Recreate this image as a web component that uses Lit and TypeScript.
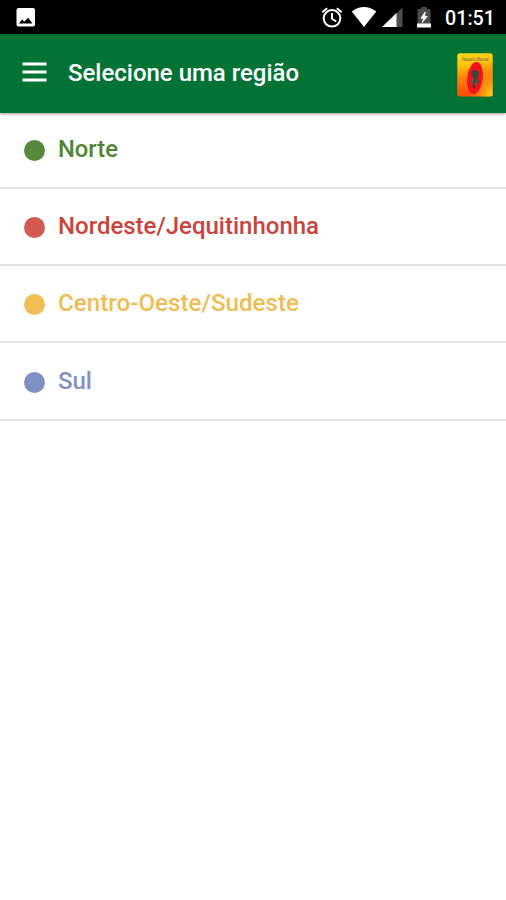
import { LitElement, html, css, svg } from "lit";
import { customElement } from "lit/decorators.js";
import { styleMap } from "lit/directives/style-map.js";

const regions = [
  { name: "Norte", dot: "#56893b", text: "#4c8632", width: 60 },
  { name: "Nordeste/Jequitinhonha", dot: "#d15950", text: "#cb4339", width: 261 },
  { name: "Centro-Oeste/Sudeste", dot: "#f1be55", text: "#efbd54", width: 241 },
  { name: "Sul", dot: "#8090c2", text: "#8391c5", width: 34 },
];

// Text fitted to a fixed advance so the labels keep the device's metrics.
const label = (text: string, width: number) => html`<svg class="label" width=${width} height="30" role="img" aria-label=${text}>
  ${svg`<text x="0" y="23" textLength=${width} lengthAdjust="spacingAndGlyphs">${text}</text>`}
</svg>`;

@customElement("app-root")
export class AppRoot extends LitElement {
  static styles = css`
    :host {
      display: flex;
      flex-direction: column;
      height: 900px;
      background: #fff;
      font-family: Roboto, "Liberation Sans", sans-serif;
      font-size: 24.5px;
      font-weight: 500;
    }
    svg { display: block; flex: none; }
    .label { overflow: visible; }
    .label text { fill: currentColor; }
    .status {
      height: 34px;
      flex: none;
      background: #000;
      color: #fff;
      font-size: 20px;
    }
    .bar {
      height: 78.5px;
      flex: none;
      box-sizing: border-box;
      display: flex;
      align-items: center;
      padding: 0 13px 0 22px;
      background: #027335;
      color: #fff;
      box-shadow: 0 1px 3px rgba(0, 0, 0, 0.4);
      z-index: 1;
    }
    .title { margin: -1px auto 0 21px; }
    .menu { margin-top: -3px; }
    .app-icon { margin-top: 4px; overflow: visible; }
    .list { display: flex; flex-direction: column; }
    .row {
      height: 77.4px;
      box-sizing: border-box;
      display: flex;
      align-items: flex-start;
      padding: 22.5px 0 0 24px;
      border-bottom: 2px solid #e2e2e2;
    }
    .row:first-child { height: 76px; padding-top: 21px; }
    .dot {
      width: 21px;
      height: 21px;
      border-radius: 50%;
      margin: 6px 12.5px 0 0;
      flex: none;
    }
  `;

  render() {
    return html`
      <svg class="status" width="506" height="34" viewBox="0 0 506 34">
        <rect x="16.5" y="8" width="18.5" height="18.5" rx="2" fill="#fff" />
        <path d="M19 23.5L22 19.5L24.3 21.5L28.2 17.7L29.8 20L32.5 23.5Z" fill="#000" />
        <g fill="none" stroke="#fff" stroke-width="2">
          <circle cx="332" cy="18.3" r="8.3" />
          <path d="M332 13V18.8L336.3 21.5" />
          <path d="M322.3 12.3L327.2 8.2M341.7 12.3L336.8 8.2" />
        </g>
        <path d="M364 27L351.8 11.4Q364 2.7 376.3 11.4Z" fill="#fff" />
        <path d="M402.5 7.5V27H396V14Z" fill="#4d4d4d" />
        <path d="M396.5 13V27H382Z" fill="#fff" />
        <path d="M421 9V7H427V9H430.5V24H417.5V9Z" fill="#4b4b4b" />
        <path d="M417 23.5H431V27.5H417Z" fill="#fff" />
        <path d="M425.2 12L420.9 18.2H423.7L422.2 22.5L427.3 16.6H424.7Z" fill="#fff" stroke="#fff" stroke-width=".8" />
        <text x="445" y="25" fill="#fff" textLength="50" lengthAdjust="spacingAndGlyphs">01:51</text>
      </svg>
      <header class="bar">
        <svg class="menu" width="25" height="20" viewBox="0 0 25 20">
          <path d="M.5 2H24.5M.5 10H24.5M.5 18H24.5" stroke="#fff" stroke-width="2.8" />
        </svg>
        <div class="title">${label("Selecione uma região", 231)}</div>
        <svg class="app-icon" width="36" height="44" viewBox="0 0 36 44">
          <defs>
            <linearGradient id="sky" x1="0" y1="0" x2=".15" y2="1">
              <stop offset="0" stop-color="#ffd91e" />
              <stop offset=".3" stop-color="#ffc20d" />
              <stop offset=".62" stop-color="#ff7a0b" />
              <stop offset="1" stop-color="#fb4a08" />
            </linearGradient>
            <radialGradient id="glow" cx="1" cy="1" r=".65">
              <stop offset="0" stop-color="#ffe21a" />
              <stop offset="1" stop-color="#ffb00a" stop-opacity="0" />
            </radialGradient>
          </defs>
          <rect x=".3" y=".3" width="35.4" height="43.2" rx="2.5" fill="url(#sky)" />
          <rect x=".3" y=".3" width="35.4" height="43.2" rx="2.5" fill="url(#glow)" />
          <ellipse cx="18" cy="25" rx="7.8" ry="16" transform="rotate(7 18 25)" fill="#f4101e" />
          <path d="M14.5 18L18 17L22 18.5L21.5 23L20.5 25.5L22.5 28L20.5 31L18.5 30L18 35.5L15 34L16.5 30L13.5 28.5L16.5 25.5L14.5 22.5Z" fill="#3f4636" />
          <path d="M16.5 26L14 31M20.5 27L18 32" stroke="#5d6d58" />
          <text x="4.5" y="8" font-size="5.6" font-style="italic" font-weight="400" fill="#705e4c" textLength="27" lengthAdjust="spacingAndGlyphs">Pequeno Manual</text>
        </svg>
      </header>
      <main class="list">
        ${regions.map(
          (r) => html`<div class="row" style=${styleMap({ color: r.text })}>
            <span class="dot" style=${styleMap({ background: r.dot })}></span>${label(r.name, r.width)}
          </div>`
        )}
      </main>
    `;
  }
}
